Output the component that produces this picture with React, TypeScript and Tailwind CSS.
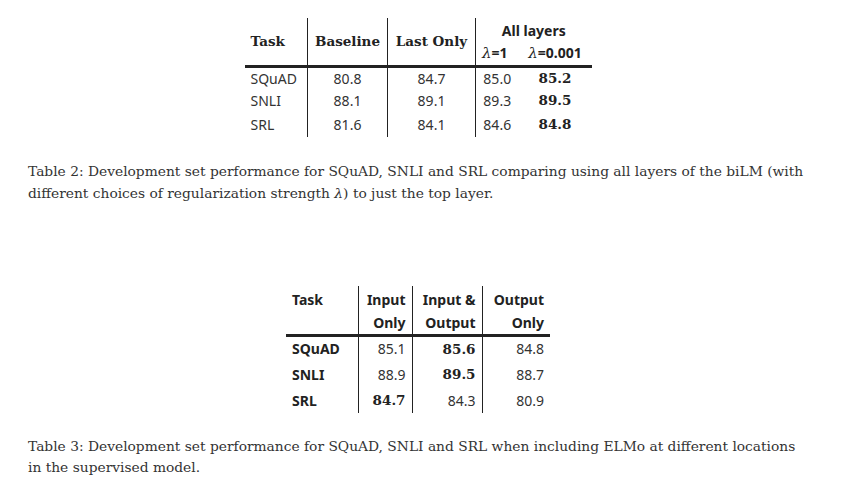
const sans = "font-['Noto_Sans','Open_Sans',sans-serif]";
const serif = "font-['DejaVu_Serif','Liberation_Serif',serif]";

function Lambda({ v }: { v: string }) {
  return (
    <span className="whitespace-nowrap">
      <span className={`${serif} text-[15px] italic font-normal`}>λ</span>={v}
    </span>
  );
}

function Table2() {
  const rows = [
    ["SQuAD", "80.8", "84.7", "85.0", "85.2"],
    ["SNLI", "88.1", "89.1", "89.3", "89.5"],
    ["SRL", "81.6", "84.1", "84.6", "84.8"],
  ];
  return (
    <table className={`mx-auto table-fixed border-collapse text-[14px] text-[#333] ${sans}`}>
      <colgroup>
        <col className="w-[63px]" />
        <col className="w-[80px]" />
        <col className="w-[88px]" />
        <col className="w-[43px]" />
        <col className="w-[73px]" />
      </colgroup>
      <thead className="border-b-[3px] border-[#222]">
        <tr className="h-[24px]">
          <th rowSpan={2} className={`pl-1.5 text-left text-[13.5px] font-bold text-[#222] ${serif}`}>
            Task
          </th>
          <th rowSpan={2} className={`border-l border-[#222] text-center text-[13.5px] font-bold text-[#222] ${serif}`}>
            Baseline
          </th>
          <th rowSpan={2} className={`border-l border-[#222] text-center text-[13.5px] font-bold text-[#222] ${serif}`}>
            Last Only
          </th>
          <th colSpan={2} className="border-l border-[#222] text-center font-bold text-[#222]">
            All layers
          </th>
        </tr>
        <tr className="h-[23px]">
          <th className="border-l border-[#222] pl-1.5 text-left font-bold text-[#222]">
            <Lambda v="1" />
          </th>
          <th className="text-center font-bold text-[#222]">
            <Lambda v="0.001" />
          </th>
        </tr>
      </thead>
      <tbody>
        {rows.map((r, i) => (
          <tr key={r[0]} className={i === 0 ? "h-[21px]" : "h-[24px]"}>
            <td className="pl-1.5 text-left">{r[0]}</td>
            <td className="border-l border-[#222] text-center">{r[1]}</td>
            <td className="border-l border-[#222] text-center">{r[2]}</td>
            <td className="border-l border-[#222] text-center">{r[3]}</td>
            <td className={`text-center text-[13.5px] font-bold text-[#222] ${serif}`}>{r[4]}</td>
          </tr>
        ))}
      </tbody>
    </table>
  );
}

function Table3() {
  const rows: [string, string, string, string, number][] = [
    ["SQuAD", "85.1", "85.6", "84.8", 2],
    ["SNLI", "88.9", "89.5", "88.7", 2],
    ["SRL", "84.7", "84.3", "80.9", 1],
  ];
  return (
    <table className={`mx-auto table-fixed border-collapse text-[14px] text-[#333] ${sans}`}>
      <colgroup>
        <col className="w-[72px]" />
        <col className="w-[54px]" />
        <col className="w-[70px]" />
        <col className="w-[68px]" />
      </colgroup>
      <thead className="border-b-[3px] border-[#222] font-bold text-[#222]">
        <tr className="h-[48px] align-top leading-[23px]">
          <th className="pl-1.5 pt-0.5 text-left">Task</th>
          <th className="border-l border-[#222] pr-1.5 pt-0.5 text-right">
            Input
            <br />
            Only
          </th>
          <th className="border-l border-[#222] pr-1.5 pt-0.5 text-right">
            Input &amp;
            <br />
            Output
          </th>
          <th className="border-l border-[#222] pr-1.5 pt-0.5 text-right">
            Output
            <br />
            Only
          </th>
        </tr>
      </thead>
      <tbody>
        {rows.map((r) => (
          <tr key={r[0]} className="h-[26px]">
            <td className="pl-1.5 text-left font-bold text-[#222]">{r[0]}</td>
            {[r[1], r[2], r[3]].map((v, i) => (
              <td
                key={i}
                className={`border-l border-[#222] pr-1.5 text-right ${
                  i + 1 === r[4] ? `text-[13.5px] font-bold text-[#222] ${serif}` : ""
                }`}
              >
                {v}
              </td>
            ))}
          </tr>
        ))}
      </tbody>
    </table>
  );
}

export default function App() {
  return (
    <div className="min-h-[486px] w-[854px] bg-white">
      <div className="w-[808px] pl-[28px] pt-[18px]">
        <Table2 />
        <p className={`mt-[23px] text-[13.8px] leading-[22px] text-[#333] ${serif}`}>
          Table 2: Development set performance for SQuAD, SNLI and SRL comparing using all layers of the biLM (with
          different choices of regularization strength <span className="italic">λ</span>) to just the top layer.
        </p>
        <div className="mt-[82px]">
          <Table3 />
        </div>
        <p className={`mt-[23px] text-[13.8px] leading-[21px] text-[#333] ${serif}`}>
          Table 3: Development set performance for SQuAD, SNLI and SRL when including ELMo at different locations
          in the supervised model.
        </p>
      </div>
    </div>
  );
}
